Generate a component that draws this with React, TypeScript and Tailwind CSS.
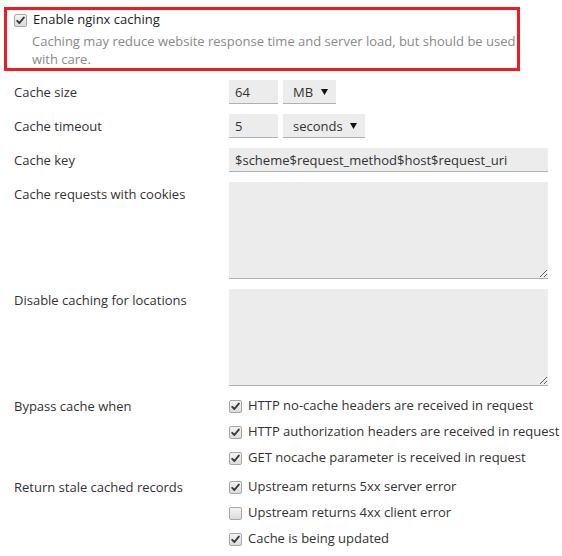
import { ReactNode } from "react";

function Check({ checked }: { checked: boolean }) {
  return (
    <span className="inline-flex h-[13px] w-[13px] shrink-0 items-center justify-center rounded-[2px] border border-[#a7a7a7] bg-gradient-to-b from-[#f4f4f4] to-[#dcdcdc]">
      {checked && (
        <svg width="9" height="9" viewBox="0 0 9 9">
          <path d="M1.2 4.8 L3.4 7 L7.8 1.6" fill="none" stroke="#3a3a3a" strokeWidth="1.9" strokeLinecap="round" strokeLinejoin="round" />
        </svg>
      )}
    </span>
  );
}

function CheckRow({ checked, children }: { checked: boolean; children: ReactNode }) {
  return (
    <label className="flex h-[26px] items-center gap-[6px] whitespace-nowrap">
      <Check checked={checked} />
      <span>{children}</span>
    </label>
  );
}

function Select({ value, width }: { value: string; width: string }) {
  return (
    <div className={`flex h-[24px] items-center justify-between border-b border-[#a9b2b8] bg-[#ececec] pl-[10px] pr-[8px] pt-[3px] ${width}`}>
      <span>{value}</span>
      <svg width="7" height="6" viewBox="0 0 7 6" className="-mt-[2px]">
        <path d="M0 0 H7 L3.5 6 Z" fill="#111" />
      </svg>
    </div>
  );
}

const inputCls = "h-[24px] border-b border-[#a9b2b8] bg-[#ececec] px-[6px] outline-none text-[#333]";

export default function App() {
  return (
    <div className="min-h-screen bg-white text-[13px] text-[#333] font-['Open_Sans',sans-serif]">
      {/* Enable toggle */}
      <div className="ml-[4px] mt-[7px] h-[64px] w-[516px] border-[3px] border-[#ed1c24] pl-[7px] pt-[1px]">
        <div className="flex h-[18px] items-center gap-[6px]">
          <Check checked />
          <span className="text-[#222]">Enable nginx caching</span>
        </div>
        <p className="-mr-[6px] mt-[3px] pl-[18px] leading-[18px] text-[#8a8a8a]">
          Caching may reduce website response time and server load, but should be used with care.
        </p>
      </div>

      <div className="mt-[9px] grid grid-cols-[215px_319px] gap-y-[10px] pl-[14px]">
        <div className="leading-[24px]">Cache size</div>
        <div className="flex gap-[5px]">
          <input className={`${inputCls} w-[49px]`} defaultValue="64" />
          <Select value="MB" width="w-[53px]" />
        </div>

        <div className="leading-[24px]">Cache timeout</div>
        <div className="flex gap-[5px]">
          <input className={`${inputCls} w-[49px]`} defaultValue="5" />
          <Select value="seconds" width="w-[82px]" />
        </div>

        <div className="leading-[24px]">Cache key</div>
        <input className={`${inputCls} w-[319px]`} defaultValue="$scheme$request_method$host$request_uri" />

        <div className="leading-[24px]">Cache requests with cookies</div>
        <textarea className="block h-[97px] w-[319px] border-b border-[#a9b2b8] bg-[#ececec] outline-none" />

        <div className="-mt-[1px] leading-[24px]">Disable caching for locations</div>
        <textarea className="block h-[97px] w-[319px] border-b border-[#a9b2b8] bg-[#ececec] outline-none" />
      </div>

      <div className="mt-[7px] grid grid-cols-[215px_1fr] pl-[14px]">
        <div className="leading-[26px]">Bypass cache when</div>
        <div>
          <CheckRow checked>HTTP no-cache headers are received in request</CheckRow>
          <CheckRow checked>HTTP authorization headers are received in request</CheckRow>
          <CheckRow checked>GET nocache parameter is received in request</CheckRow>
        </div>
      </div>

      <div className="mt-[3px] grid grid-cols-[215px_1fr] pl-[14px]">
        <div className="leading-[26px]">Return stale cached records</div>
        <div>
          <CheckRow checked>Upstream returns 5xx server error</CheckRow>
          <CheckRow checked={false}>Upstream returns 4xx client error</CheckRow>
          <CheckRow checked>Cache is being updated</CheckRow>
        </div>
      </div>
    </div>
  );
}
